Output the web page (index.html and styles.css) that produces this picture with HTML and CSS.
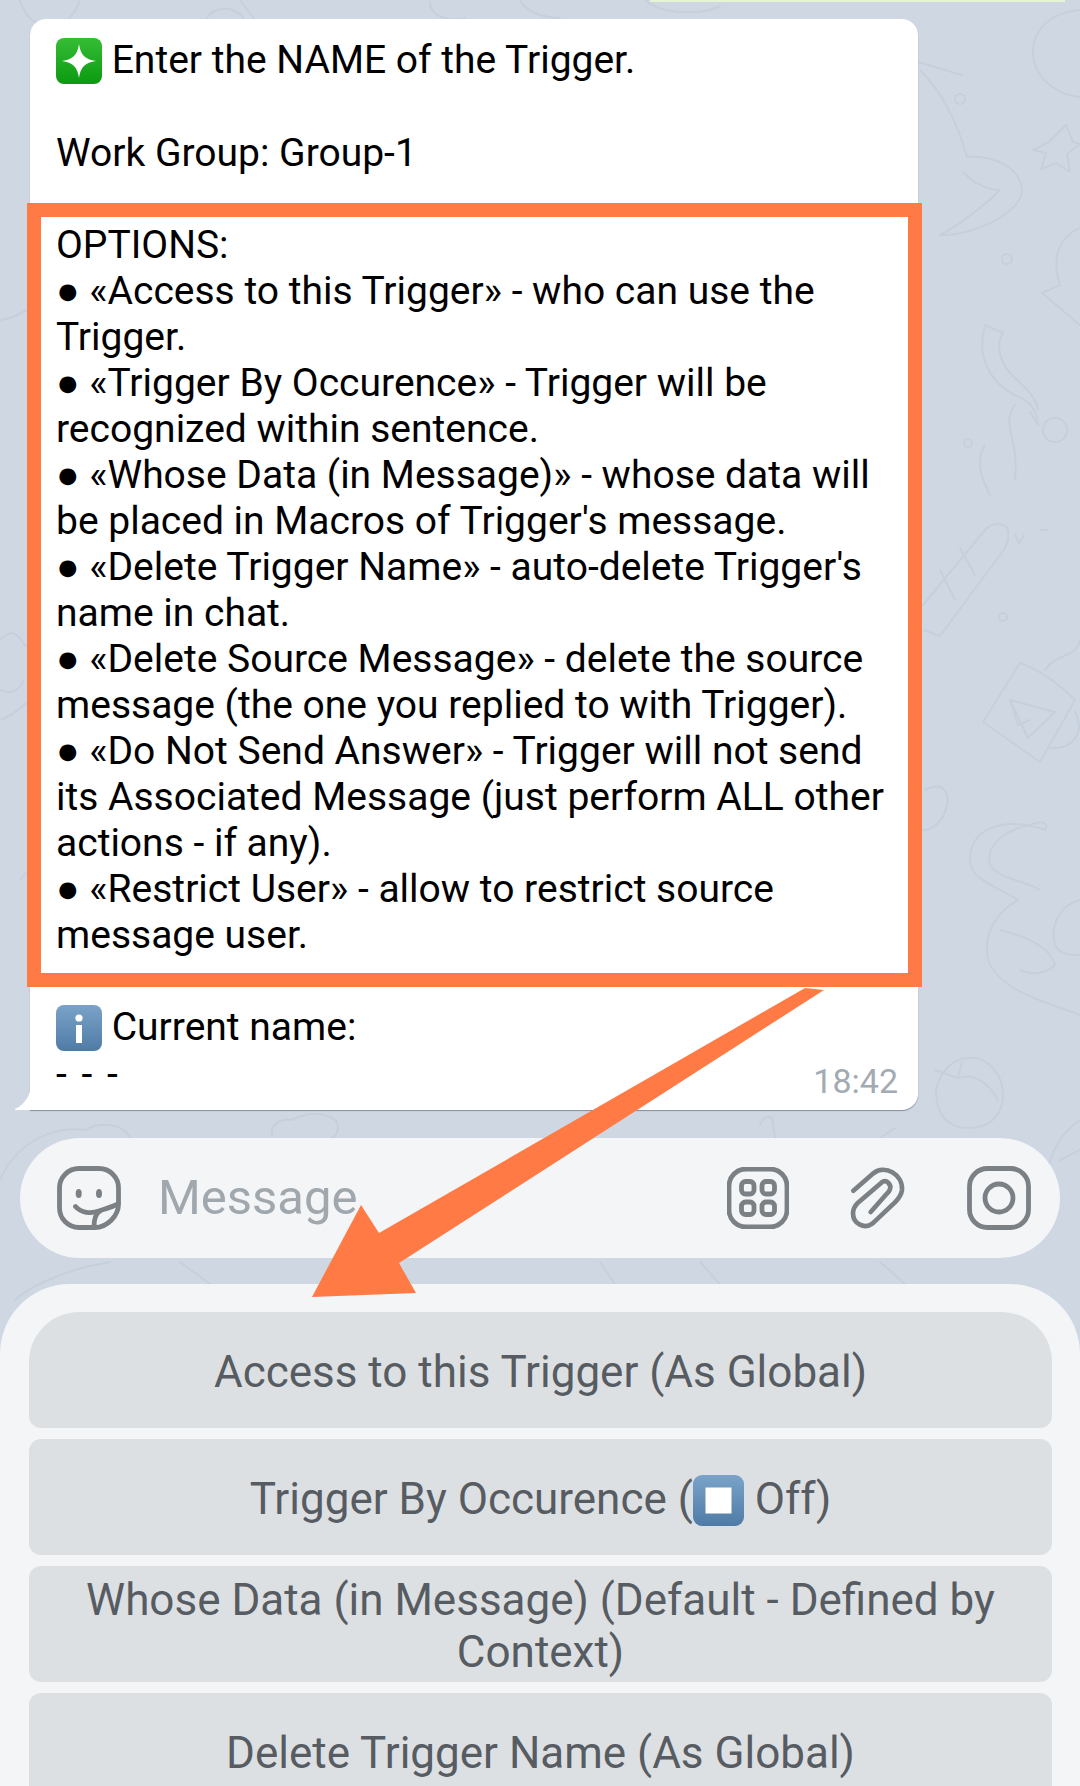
FILE: index.html
```html
<!DOCTYPE html>
<html lang="en">
<head>
<meta charset="utf-8">
<title>Trigger options</title>
<link rel="stylesheet" href="styles.css">
</head>
<body>
<main class="stage">
  <svg class="doodles" viewBox="0 0 1080 1786" aria-hidden="true">
    <g class="doodle-lines">
      <path d="M1080 10C1050 12 1033 30 1033 52C1033 76 1055 95 1080 97"/>
      <path d="M1066 125l7 17 7 2-13 10 3 18-14-9-15 6 5-16-13-3 16-8z"/>
      <path d="M918 62L962 75M920 70C945 95 958 125 967 157C990 155 1020 165 1022 190C1022 212 975 236 940 235M963 172C975 185 990 190 1000 190C985 205 960 225 940 235"/>
      <circle cx="960" cy="99" r="5"/>
      <circle cx="1007" cy="259" r="5"/>
      <path d="M1080 228C1062 235 1050 255 1060 285L1042 293L1080 325"/>
      <path d="M985 325C978 350 985 370 1000 385C1015 400 1035 395 1038 425L1030 412M985 325L1003 333C995 345 1000 365 1015 378C1025 388 1035 395 1038 410"/>
      <path d="M1015 405C1000 425 1020 440 1015 480M985 445C975 460 982 480 990 495"/>
      <circle cx="1055" cy="430" r="12"/>
      <circle cx="968" cy="443" r="4"/>
      <path d="M923 605L985 530C992 522 1005 522 1008 530C1010 540 1005 550 1000 555L940 636L924 630M940 570L955 600M960 548L975 575"/>
      <circle cx="1003" cy="617" r="4"/>
      <path d="M1015 535l4 8 5-8M1040 530h8"/>
      <path d="M1020 663L983 722L1040 762L1075 700C1060 685 1040 670 1020 663ZM1010 700L1055 712L1028 738ZM1010 700L1018 725L1030 720M1075 712C1085 730 1075 750 1050 748"/>
      <path d="M1045 670C1060 650 1075 660 1080 640"/>
      <path d="M925 790C945 780 952 795 945 812C940 825 930 830 923 830"/>
      <path d="M1045 830C1000 815 970 830 970 860C970 880 995 885 1018 900C1000 910 982 930 988 960C1000 990 1040 1000 1080 1015M1045 830C1050 822 1040 820 1030 825C1005 830 985 845 990 865C1000 880 1025 880 1040 890M1080 900C1060 905 1050 925 1055 945C1060 955 1070 955 1080 955M1000 930C1020 935 1050 945 1055 965C1045 975 1030 975 1020 970"/>
      <path d="M936 1090C940 1070 955 1058 968 1058C988 1056 1003 1075 1003 1095C1003 1115 990 1128 968 1128C948 1128 936 1115 936 1090ZM935 1070L958 1078C975 1072 990 1085 998 1100M958 1078L962 1062"/>
      <path d="M1080 1120C1050 1140 1040 1180 1050 1210M1060 1160L1080 1150"/>
      <path d="M0 320C15 318 30 310 40 298"/>
      <path d="M0 640C10 630 15 630 25 645L40 658M0 690C12 695 20 690 24 680M0 720C15 715 30 700 40 690"/>
      <path d="M20 880C28 870 35 865 40 862"/>
      <path d="M0 1180C15 1145 50 1125 85 1130C105 1120 130 1125 132 1145"/>
      <path d="M272 1136C270 1125 280 1118 292 1120C305 1112 325 1112 335 1120C340 1125 338 1135 332 1138"/>
      <path d="M20 0C25 20 45 35 70 25M80 0C75 15 60 30 50 35"/>
      <path d="M205 20C215 5 235 5 245 20M240 0L255 20"/>
      <path d="M430 2C430 15 445 22 465 18M520 0C525 10 540 18 560 18M645 0C660 14 700 16 720 6"/>
      <path d="M760 1125C762 1118 768 1115 772 1118L775 1138M880 1138L895 1128"/>
      <path d="M15 1300C25 1290 60 1270 110 1262M180 1262L210 1284M600 1262L615 1284M700 1262L720 1284M880 1262C890 1270 900 1280 905 1284"/>
    </g>
  </svg>

  <div class="peek"></div>

  <article class="bubble">
    <svg class="tail" viewBox="0 0 17 30" aria-hidden="true"><path d="M17 0C16 14 11 24 0 29C-1 30 1 30 2 30H17Z"/></svg>
    <p class="line"><svg class="emoji" viewBox="0 0 46 46" aria-hidden="true">
        <defs><linearGradient id="greenFill" x1="0" y1="0" x2="0" y2="1"><stop offset="0" stop-color="#35bd35"/><stop offset="1" stop-color="#0b9a10"/></linearGradient></defs>
        <rect width="46" height="46" rx="8" fill="url(#greenFill)"/>
        <path d="M23 6C24.500 17 29 21.500 40 23C29 24.500 24.500 29 23 40C21.500 29 17 24.500 6 23C17 21.500 21.500 17 23 6Z" fill="#fff"/>
      </svg> Enter the NAME of the Trigger.</p>
    <p class="line blank"></p>
    <p class="line">Work Group: Group-1</p>
    <p class="line blank"></p>
    <p class="line">OPTIONS:</p>
    <p class="line">● «Access to this Trigger» - who can use the Trigger.</p>
    <p class="line">● «Trigger By Occurence» - Trigger will be recognized within sentence.</p>
    <p class="line">● «Whose Data (in Message)» - whose data will be placed in Macros of Trigger's message.</p>
    <p class="line">● «Delete Trigger Name» - auto-delete Trigger's name in chat.</p>
    <p class="line">● «Delete Source Message» - delete the source message (the one you replied to with Trigger).</p>
    <p class="line">● «Do Not Send Answer» - Trigger will not send its Associated Message (just perform ALL other actions - if any).</p>
    <p class="line">● «Restrict User» - allow to restrict source message user.</p>
    <p class="line blank"></p>
    <p class="line"><svg class="emoji" viewBox="0 0 46 46" aria-hidden="true">
        <defs><linearGradient id="blueFill" x1="0" y1="0" x2="0" y2="1"><stop offset="0" stop-color="#7ba3c8"/><stop offset="1" stop-color="#4e7ba6"/></linearGradient></defs>
        <rect width="46" height="46" rx="8" fill="url(#blueFill)"/>
        <circle cx="23" cy="13" r="3.600" fill="#fff"/>
        <path d="M20 20h6v18h-6z" fill="#fff"/>
      </svg> Current name:</p>
    <p class="line dashes">- - -</p>
    <time class="stamp">18:42</time>
  </article>

  <section class="composer">
    <svg class="icon sticker" viewBox="0 0 64 64" aria-hidden="true">
      <path d="M38 61.500H22A19.500 19.500 0 0 1 2.500 42V22A19.500 19.500 0 0 1 22 2.500H42A19.500 19.500 0 0 1 61.500 22V38C61.500 50 50 61.500 38 61.500Z"/>
      <path d="M18.500 40.500C24 47 34 48 42 45C48 43 55 41 61 38"/>
      <path d="M37 61C37 54 38 48 43 45"/>
      <ellipse class="solid" cx="21.700" cy="27.400" rx="3" ry="4.500"/>
      <ellipse class="solid" cx="42" cy="27.400" rx="3" ry="4.500"/>
    </svg>
    <span class="placeholder">Message</span>
    <div class="tools">
      <svg class="icon" viewBox="0 0 62 62" aria-hidden="true">
        <rect x="2" y="2" width="58" height="58" rx="17"/>
        <rect x="14.500" y="14.500" width="12.500" height="12.500" rx="4"/>
        <rect x="35" y="14.500" width="12.500" height="12.500" rx="4"/>
        <rect x="14.500" y="35" width="12.500" height="12.500" rx="4"/>
        <rect x="35" y="35" width="12.500" height="12.500" rx="4"/>
      </svg>
      <svg class="icon clip" viewBox="420 50 180 195" aria-hidden="true">
        <path d="M436 124L496 72C530 44 585 75 582 122C580 140 570 150 560 160L494 222C470 240 435 225 435 192C435 178 440 170 450 160L520 100C535 88 552 105 545 122C543 128 538 132 533 137L488 188"/>
      </svg>
      <svg class="icon camera" viewBox="0 0 64 64" aria-hidden="true">
        <rect x="2.500" y="2.500" width="59" height="59" rx="18"/>
        <circle cx="32" cy="32" r="14"/>
      </svg>
    </div>
  </section>

  <nav class="keyboard">
    <div class="key key-first"><span>Access to this Trigger (As Global)</span></div>
    <div class="key"><span>Trigger By Occurence (<svg class="emoji-stop" viewBox="0 0 51 51" aria-hidden="true">
        <defs><linearGradient id="stopFill" x1="0" y1="0" x2="0" y2="1"><stop offset="0" stop-color="#7ba3c8"/><stop offset="1" stop-color="#4e7ba6"/></linearGradient></defs>
        <rect width="51" height="51" rx="9" fill="url(#stopFill)"/>
        <rect x="12.500" y="12.500" width="26" height="26" fill="#fff"/>
      </svg> Off)</span></div>
    <div class="key"><span>Whose Data (in Message) (Default - Defined by Context)</span></div>
    <div class="key"><span>Delete Trigger Name (As Global)</span></div>
  </nav>

  <div class="frame"></div>
  <svg class="arrow" viewBox="0 0 1080 1786" aria-hidden="true">
    <polygon points="805,988 824,990 399,1263 416,1293 312,1297 361,1205 379,1233"/>
  </svg>
</main>
</body>
</html>
```
FILE: styles.css
```css
* {
  box-sizing: border-box;
}

html,
body {
  margin: 0;
  height: 1786px;
  overflow: hidden;
}

body {
  background: #cfd8e2;
  font-family: Roboto, "Liberation Sans", sans-serif;
}

.stage {
  position: relative;
  display: flex;
  flex-direction: column;
  width: 1080px;
  height: 1786px;
  overflow: hidden;
}

.doodles,
.arrow {
  position: absolute;
  top: 0;
  left: 0;
  width: 1080px;
  height: 1786px;
}

.doodle-lines {
  fill: none;
  stroke: #c6d0dc;
  stroke-width: 2;
  stroke-linecap: round;
  stroke-linejoin: round;
}

.peek {
  position: relative;
  flex: none;
  width: 415px;
  height: 2px;
  margin-left: 650px;
  background: #e4f5d3;
}

.bubble {
  position: relative;
  flex: none;
  width: 888px;
  height: 1091px;
  margin: 17px 0 0 30px;
  padding: 18px 24px 0 26px;
  background: #fff;
  border-radius: 16px 16px 16px 0;
  box-shadow: 0 1px 1px rgba(70, 85, 100, 0.55);
  color: #000;
  font-size: 39px;
  line-height: 46px;
}

.line {
  margin: 0;
}

.blank {
  height: 46px;
}

.tail {
  position: absolute;
  left: -15px;
  bottom: 0;
  width: 17px;
  height: 30px;
  fill: #fff;
}

.emoji {
  width: 46px;
  height: 46px;
  vertical-align: -11px;
}

.dashes {
  letter-spacing: 2.500px;
}

.stamp {
  position: absolute;
  right: 20px;
  bottom: 9px;
  color: #a3abb2;
  font-size: 34px;
  letter-spacing: 0;
  line-height: 40px;
}

.composer {
  position: relative;
  display: flex;
  flex: none;
  align-items: center;
  width: 1040px;
  height: 120px;
  margin: 28px 0 0 20px;
  padding: 0 29px 0 37px;
  background: #f3f5f7;
  border-radius: 60px;
}

.icon {
  flex: none;
  width: 62px;
  height: 62px;
  fill: none;
  stroke: #7b8085;
  stroke-width: 4.800;
  stroke-linecap: round;
  stroke-linejoin: round;
}

.sticker,
.camera {
  width: 64px;
  height: 64px;
}

.clip {
  width: 60px;
  height: 65px;
  stroke-width: 14;
}

.solid {
  fill: #7b8085;
  stroke: none;
}

.placeholder {
  margin-left: 37px;
  color: #a0a8ae;
  font-size: 49px;
  line-height: 56px;
}

.tools {
  display: flex;
  align-items: center;
  gap: 59px;
  margin-left: auto;
}

.keyboard {
  position: relative;
  display: flex;
  flex: 1;
  flex-direction: column;
  gap: 11px;
  margin-top: 26px;
  padding: 28px 28px 0 29px;
  background: #f3f5f7;
  border-radius: 70px 70px 0 0;
}

.key {
  display: flex;
  flex: none;
  align-items: center;
  justify-content: center;
  height: 116px;
  padding: 4px 40px 0;
  background: #dde0e3;
  border-radius: 12px;
  color: #565c61;
  font-size: 44px;
  line-height: 52px;
  text-align: center;
}

.key-first {
  border-radius: 50px 50px 12px 12px;
}

.emoji-stop {
  width: 51px;
  height: 51px;
  vertical-align: -12px;
}

.frame {
  position: absolute;
  top: 203px;
  left: 27px;
  width: 895px;
  height: 784px;
  border: 14px solid #ff7a45;
}

.arrow polygon {
  fill: #ff7a45;
}
```
